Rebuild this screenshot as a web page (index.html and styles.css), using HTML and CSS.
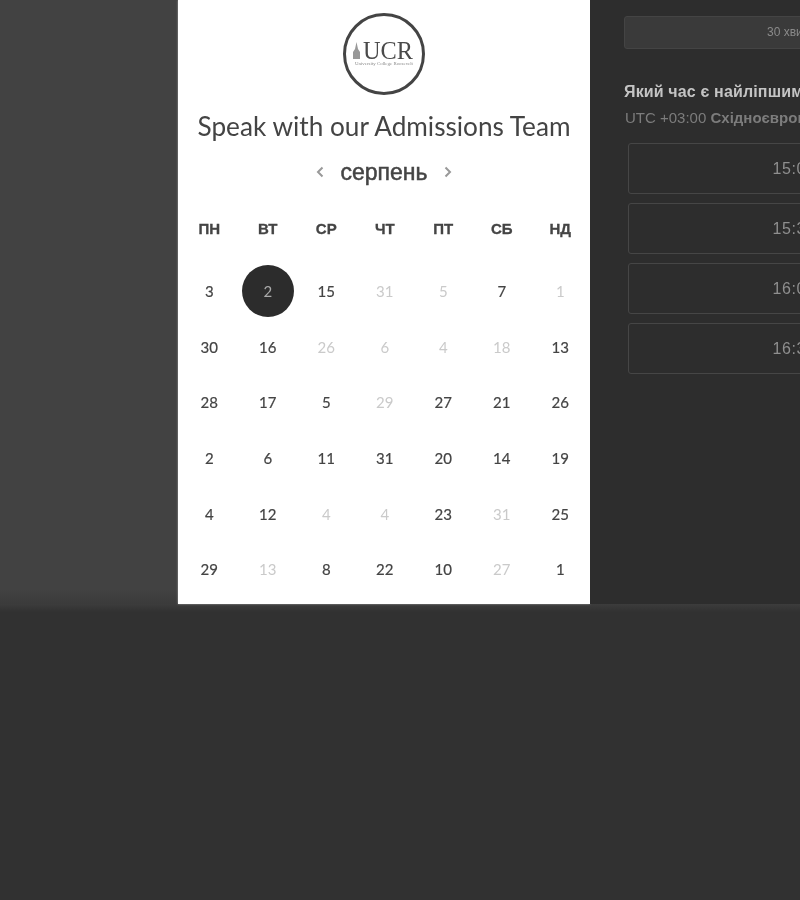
FILE: index.html
```html
<!DOCTYPE html>
<html>
<head>
<meta charset="utf-8">
<title>Speak with our Admissions Team</title>
<link rel="stylesheet" href="styles.css">
</head>
<body>
<div class="page">
  <div class="side"></div>
  <div class="card">
    <div class="logo">
      <svg width="84" height="84" viewBox="0 0 84 84">
        <circle cx="42" cy="42" r="39.500" fill="#fff" stroke="#444" stroke-width="3"/>
        <path d="M11 47V40l2-3 1.500-7 1.500 7 2 3v7z" fill="#999"/>
        <text x="21" y="46.500" class="logo-name" textLength="50" lengthAdjust="spacingAndGlyphs">UCR</text>
        <text x="13" y="52.500" class="logo-sub" textLength="58" lengthAdjust="spacingAndGlyphs">University College Roosevelt</text>
      </svg>
    </div>
    <h1 class="title">Speak with our Admissions Team</h1>
    <div class="month">
      <svg class="arrow" width="8" height="12" viewBox="0 0 8 12"><path d="M6.500 1.500 2 6l4.500 4.500"/></svg>
      <span class="month-name">серпень</span>
      <svg class="arrow" width="8" height="12" viewBox="0 0 8 12"><path d="M1.500 1.500 6 6l-4.500 4.500"/></svg>
    </div>
    <div class="weekdays">
      <span>ПН</span><span>ВТ</span><span>СР</span><span>ЧТ</span><span>ПТ</span><span>СБ</span><span>НД</span>
    </div>
    <div class="days">
      <span>3</span><span><b class="picked">2</b></span><span>15</span><span class="off">31</span><span class="off">5</span><span>7</span><span class="off">1</span>
      <span>30</span><span>16</span><span class="off">26</span><span class="off">6</span><span class="off">4</span><span class="off">18</span><span>13</span>
      <span>28</span><span>17</span><span>5</span><span class="off">29</span><span>27</span><span>21</span><span>26</span>
      <span>2</span><span>6</span><span>11</span><span>31</span><span>20</span><span>14</span><span>19</span>
      <span>4</span><span>12</span><span class="off">4</span><span class="off">4</span><span>23</span><span class="off">31</span><span>25</span>
      <span>29</span><span class="off">13</span><span>8</span><span>22</span><span>10</span><span class="off">27</span><span>1</span>
    </div>
  </div>
  <div class="times">
    <div class="length">30 хвилин</div>
    <h2 class="when">Який час є найліпшим для вас?</h2>
    <p class="zone">UTC +03:00 <b>Східноєвропейський час</b></p>
    <div class="slot">15:00</div>
    <div class="slot">15:30</div>
    <div class="slot">16:00</div>
    <div class="slot">16:30</div>
  </div>
</div>
<div class="under"></div>
</body>
</html>
```

FILE: styles.css
```css
html, body {
  margin: 0;
  height: 100%;
  overflow: hidden;
  background-color: #313131;
}
.page {
  display: flex;
  height: 604px;
  font-family: "Liberation Sans", Arial, sans-serif;
}
.side {
  flex: 0 0 178px;
  background: linear-gradient(to bottom, #424242 0, #424242 590px, #3b3b3b 604px);
}
.card {
  flex: 0 0 412px;
  background-color: #fff;
  box-shadow: 0 0 2px rgba(255,255,255,.5);
  filter: blur(.4px);
  padding-top: 12px;
  box-sizing: border-box;
}
.logo {
  height: 84px;
  display: flex;
  justify-content: center;
}
.logo-name {
  font-family: "Liberation Serif", serif;
  font-size: 25px;
  fill: #4a4a4a;
}
.logo-sub {
  font-family: "Liberation Serif", serif;
  font-size: 3.500px;
  fill: #888;
}
.title {
  margin: 12px 0 0;
  font-family: Lato, sans-serif;
  font-weight: 400;
  font-size: 26.200px;
  line-height: 36px;
  color: #444;
  text-align: center;
}
.month {
  display: flex;
  justify-content: center;
  align-items: center;
  gap: 16px;
  margin-top: 13px;
  height: 30px;
}
.month-name {
  font-size: 23px;
  -webkit-text-stroke: .5px #444;
  color: #444;
}
.arrow {
  fill: none;
  stroke: #999;
  stroke-width: 2;
}
.weekdays, .days {
  display: grid;
  grid-template-columns: repeat(7, 58.500px);
  margin-left: 2px;
  text-align: center;
}
.weekdays {
  margin-top: 32px;
  font-size: 15px;
  font-weight: 700;
  -webkit-text-stroke: .3px #444;
  color: #444;
  line-height: 20px;
}
.days {
  margin-top: 24px;
  grid-auto-rows: 55.700px;
  font-family: Lato, sans-serif;
  font-size: 15px;
  -webkit-text-stroke: .2px #444;
  color: #444;
  align-items: center;
  justify-items: center;
}
.off {
  color: #cacaca;
  -webkit-text-stroke: 0;
}
.picked {
  display: flex;
  align-items: center;
  justify-content: center;
  width: 52px;
  height: 52px;
  border-radius: 50%;
  background-color: #2c2c2c;
  color: #aaa;
  font-weight: 400;
  -webkit-text-stroke: 0;
}
.times {
  flex: 1;
  min-width: 0;
  overflow: hidden;
  background-color: #2d2d2d;
  padding: 16px 0 0 34px;
  filter: blur(.4px);
}
.length, .when, .zone {
  white-space: nowrap;
}
.length {
  width: 340px;
  height: 31px;
  line-height: 31px;
  border: 1px solid #444;
  border-radius: 3px;
  background-color: #3a3a3a;
  color: #8a8a8a;
  font-size: 12px;
  text-align: center;
}
.when {
  margin: 33px 0 0;
  font-size: 16px;
  line-height: 20px;
  font-weight: 700;
  letter-spacing: .15px;
  color: #c4c4c4;
}
.zone {
  margin: 7px 0 0 1px;
  font-size: 15px;
  line-height: 18px;
  color: #7c7c7c;
}
.slot {
  width: 330px;
  height: 49px;
  line-height: 49px;
  margin: 0 0 9px 4px;
  border: 1px solid #464646;
  border-radius: 3px;
  color: #8e8e8e;
  font-size: 16px;
  letter-spacing: .6px;
  text-align: center;
}
.zone + .slot {
  margin-top: 16px;
}
.under {
  height: 296px;
  background: linear-gradient(to bottom, #3c3c3c 0, #313131 8px);
}
```
